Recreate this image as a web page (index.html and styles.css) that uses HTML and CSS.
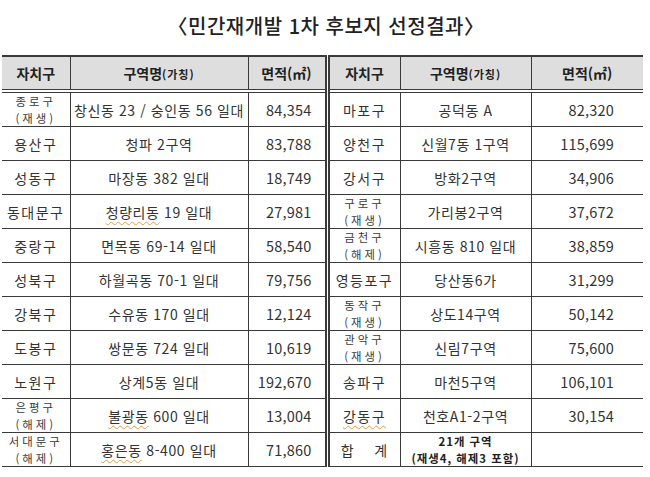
FILE: index.html
```html
<!DOCTYPE html>
<html lang="ko">
<head>
<meta charset="utf-8">
<link rel="stylesheet" href="styles.css">
</head>
<body>
<div class="page">
  <h1 class="title">〈민간재개발 1차 후보지 선정결과〉</h1>
  <table class="grid">
    <colgroup>
      <col class="c1"><col class="c2"><col class="c3"><col class="c4"><col class="c5"><col class="c6">
    </colgroup>
    <thead>
      <tr>
        <th>자치구</th><th>구역명<small>(가칭)</small></th><th class="sep">면적(㎡)</th>
        <th class="div">자치구</th><th>구역명<small>(가칭)</small></th><th>면적(㎡)</th>
      </tr>
    </thead>
    <tbody>
      <tr>
        <td class="gu two">종로구<br>(재생)</td><td>창신동 23 / 숭인동 56 일대</td><td class="num">84,354</td>
        <td class="div gu">마포구</td><td>공덕동 A</td><td class="num r">82,320</td>
      </tr>
      <tr>
        <td class="gu">용산구</td><td>청파 2구역</td><td class="num">83,788</td>
        <td class="div gu">양천구</td><td>신월7동 1구역</td><td class="num r">115,699</td>
      </tr>
      <tr>
        <td class="gu">성동구</td><td>마장동 382 일대</td><td class="num">18,749</td>
        <td class="div gu">강서구</td><td>방화2구역</td><td class="num r">34,906</td>
      </tr>
      <tr>
        <td class="gu">동대문구</td><td><span class="sq">청량리동</span> 19 일대</td><td class="num">27,981</td>
        <td class="div gu two">구로구<br>(재생)</td><td>가리봉2구역</td><td class="num r">37,672</td>
      </tr>
      <tr>
        <td class="gu">중랑구</td><td>면목동 69-14 일대</td><td class="num">58,540</td>
        <td class="div gu two">금천구<br>(해제)</td><td>시흥동 810 일대</td><td class="num r">38,859</td>
      </tr>
      <tr>
        <td class="gu">성북구</td><td>하월곡동 70-1 일대</td><td class="num">79,756</td>
        <td class="div gu">영등포구</td><td>당산동6가</td><td class="num r">31,299</td>
      </tr>
      <tr>
        <td class="gu">강북구</td><td>수유동 170 일대</td><td class="num">12,124</td>
        <td class="div gu two">동작구<br>(재생)</td><td>상도14구역</td><td class="num r">50,142</td>
      </tr>
      <tr>
        <td class="gu">도봉구</td><td>쌍문동 724 일대</td><td class="num">10,619</td>
        <td class="div gu two">관악구<br>(재생)</td><td>신림7구역</td><td class="num r">75,600</td>
      </tr>
      <tr>
        <td class="gu">노원구</td><td>상계5동 일대</td><td class="num">192,670</td>
        <td class="div gu">송파구</td><td>마천5구역</td><td class="num r">106,101</td>
      </tr>
      <tr>
        <td class="gu two">은평구<br>(해제)</td><td><span class="sq">불광동</span> 600 일대</td><td class="num">13,004</td>
        <td class="div gu"><span class="sq">강동구</span></td><td>천호A1-2구역</td><td class="num r">30,154</td>
      </tr>
      <tr>
        <td class="gu two">서대문구<br>(해제)</td><td><span class="sq">홍은동</span> 8-400 일대</td><td class="num">71,860</td>
        <td class="div gu sum">합&nbsp;&nbsp;&nbsp;&nbsp;계</td><td class="total">21개 구역<br>(재생4, 해제3 포함)</td><td class="num r"></td>
      </tr>
    </tbody>
  </table>
</div>
</body>
</html>
```

FILE: styles.css
```css
html, body {
  margin: 0;
  padding: 0;
  background: #ffffff;
}

body {
  font-family: "Noto Sans CJK KR", "Noto Sans", sans-serif;
  color: #333333;
}

.page {
  width: 650px;
  padding: 13px 0 0 2px;
  box-sizing: border-box;
}

.title {
  margin: 0 0 16px 0;
  height: 26px;
  line-height: 26px;
  text-align: center;
  font-size: 20px;
  font-weight: 500;
  color: #222222;
  letter-spacing: 0.5px;
}

.grid {
  width: 641px;
  border-collapse: collapse;
  table-layout: fixed;
}

.c1 { width: 68px; }
.c2 { width: 178px; }
.c3 { width: 79px; }
.c4 { width: 73px; }
.c5 { width: 131px; }
.c6 { width: 112px; }

.grid th,
.grid td {
  border-left: 1px solid #3a3a3a;
  border-bottom: 1px solid #3a3a3a;
  padding: 0;
  text-align: center;
  vertical-align: middle;
  white-space: nowrap;
  overflow: hidden;
}

.grid tr > :first-child {
  border-left: none;
}

.grid th {
  height: 32px;
  background: #dedede;
  border-top: 2px solid #3a3a3a;
  border-bottom: 4px double #3a3a3a;
  font-size: 14px;
  font-weight: 700;
  color: #222222;
}

.grid th small {
  font-size: 11px;
  font-weight: 700;
  letter-spacing: 1px;
}

.grid td {
  height: 33px;
  font-size: 14px;
  letter-spacing: 0.6px;
  line-height: 20px;
}

.grid .div {
  border-left: 5px double #3a3a3a;
}

.grid td.gu {
  letter-spacing: 1.5px;
}

.grid td.two {
  font-size: 11.4px;
  line-height: 16.5px;
  letter-spacing: 3px;
  color: #3a3a3a;
}

.grid td.num {
  text-align: right;
  padding-right: 13px;
  font-size: 14.5px;
  letter-spacing: 0.2px;
}

.grid td.num.r {
  padding-right: 29px;
}

.sq {
  text-decoration: underline wavy #e39a4a;
  text-decoration-thickness: 1px;
  text-underline-offset: 3px;
}

.grid td.sum {
  letter-spacing: 1px;
}

.grid td.total {
  font-size: 11.4px;
  font-weight: 700;
  line-height: 16.5px;
  letter-spacing: 1px;
  color: #222222;
}
```
